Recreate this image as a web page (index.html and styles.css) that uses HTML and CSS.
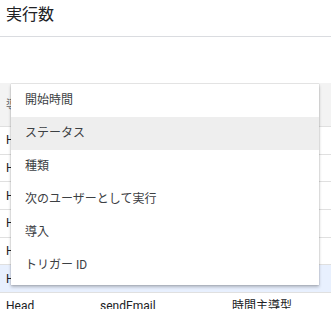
FILE: index.html
```html
<!DOCTYPE html>
<html lang="ja">
<head>
    <meta charset="UTF-8">
    <title>実行数</title>
<link rel="stylesheet" href="styles.css">
</head>
<body>
<div class="title">実行数</div>
<div class="table">
    <div class="row head">
        <div>導入</div>
        <div>関数</div>
        <div>種類</div>
    </div>
    <div class="row"><div>Head</div><div>sendEmail</div><div>時間主導型</div></div>
    <div class="row"><div>Head</div><div>sendEmail</div><div>時間主導型</div></div>
    <div class="row"><div>Head</div><div>sendEmail</div><div>時間主導型</div></div>
    <div class="row"><div>Head</div><div>sendEmail</div><div>時間主導型</div></div>
    <div class="row"><div>Head</div><div>sendEmail</div><div>時間主導型</div></div>
    <div class="row selected"><div>Head</div><div>sendEmail</div><div>時間主導型</div></div>
    <div class="row"><div>Head</div><div>sendEmail</div><div>時間主導型</div></div>

    <div class="menu">
        <div class="item">開始時間</div>
        <div class="item hover">ステータス</div>
        <div class="item">種類</div>
        <div class="item">次のユーザーとして実行</div>
        <div class="item">導入</div>
        <div class="item">トリガー ID</div>
    </div>
</div>
</body>
</html>
```

FILE: styles.css
```css
body{
    margin: 0;
    font-family: Roboto, "Noto Sans CJK JP", sans-serif;
    color: #202124;
    background: #fff;
    overflow: hidden;
}
.title{
    height: 36px;
    line-height: 30px;
    padding-left: 6px;
    font-size: 16px;
    border-bottom: 1px solid #dadce0;
}
.table{
    position: relative;
    margin-top: 46px;
    font-size: 12px;
}
.row{
    display: grid;
    grid-template-columns: 94px 132px 1fr;
    align-items: center;
    height: 26.67px;
    line-height: 16px;
    padding-left: 6px;
    border-bottom: 1px solid #e0e0e0;
    white-space: nowrap;
}
.head{
    height: 43px;
    background-color: #f3f3f3;
    color: #5f6368;
}
.selected{
    background-color: #e8f0fe;
}
.menu{
    position: absolute;
    top: 1px;
    left: 11px;
    width: 308px;
    padding-bottom: 3px;
    background: #fff;
    box-shadow: 0 2px 3px rgba(0,0,0,.25), 0 0 1px rgba(0,0,0,.3);
    z-index: 2;
}
.item{
    height: 33px;
    line-height: 33px;
    padding-left: 14px;
    font-size: 12px;
    color: #3c4043;
}
.hover{
    background-color: #eeeeee;
}
```
